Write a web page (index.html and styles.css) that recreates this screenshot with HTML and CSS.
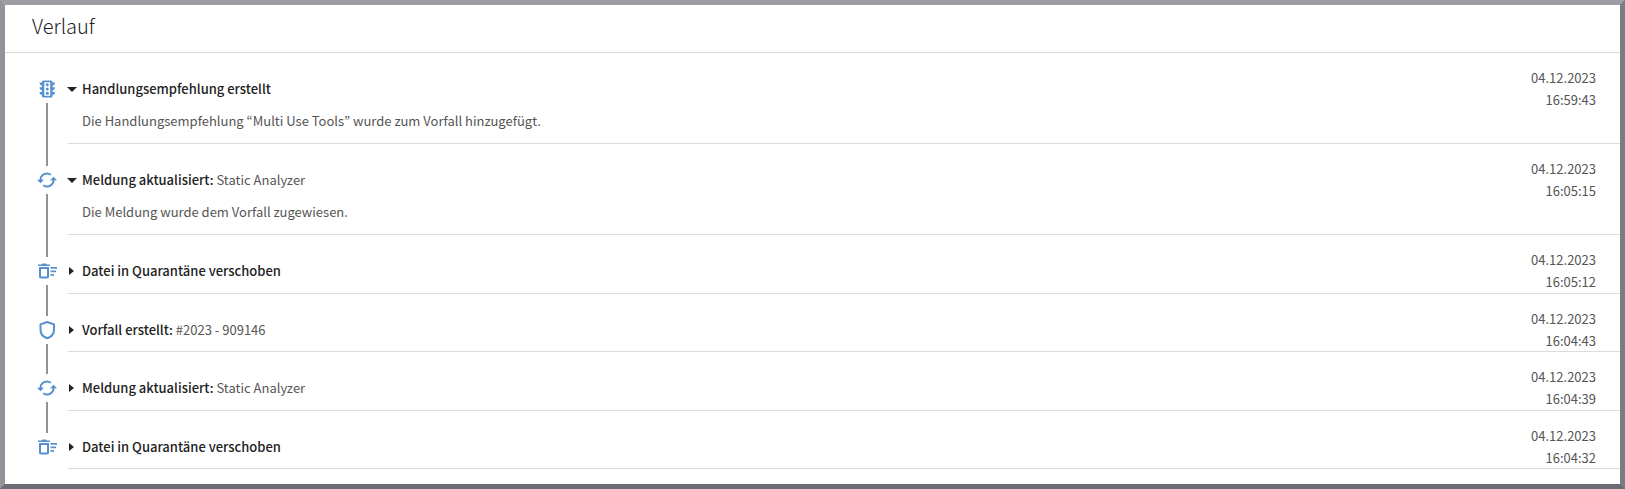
FILE: index.html
```html
<!DOCTYPE html>
<html lang="de">
<head>
<meta charset="utf-8">
<title>Verlauf</title>
<link rel="stylesheet" href="styles.css">
</head>
<body>
<svg class="sprite" aria-hidden="true">
  <symbol id="traffic" viewBox="0 0 20 20">
    <path fill-rule="evenodd" d="M6.500 1.500h7.500a1.500 1.500 0 0 1 1.500 1.500v.5H18c0 1.700-1 2.900-2.500 3.200v1.500H18c0 1.700-1 2.900-2.500 3.200v1.500H18c0 1.700-1 2.900-2.500 3.200v.9a1.500 1.500 0 0 1-1.500 1.500H6.500A1.500 1.500 0 0 1 5 17v-.9c-1.500-.3-2.500-1.500-2.500-3.200H5v-1.500c-1.500-.3-2.500-1.500-2.500-3.200H5V6.700C3.500 6.400 2.500 5.200 2.500 3.500H5V3a1.500 1.500 0 0 1 1.500-1.500zM7.300 3.300v13.400h5.900V3.300z"/>
    <circle cx="10.250" cy="5.700" r="1.500"/>
    <circle cx="10.250" cy="10" r="1.500"/>
    <circle cx="10.250" cy="14.300" r="1.500"/>
  </symbol>
  <symbol id="sync" viewBox="0 0 20 20">
    <path fill="none" stroke="currentColor" stroke-width="2" d="M3.500 10A6.500 6.500 0 0 1 13.800 4.700M16.500 10A6.500 6.500 0 0 1 6.200 15.300"/>
    <path d="M0 9.800h7L3.500 13.300zM13 10.200h7L16.500 6.700z"/>
  </symbol>
  <symbol id="trash" viewBox="0 0 20 20">
    <path fill-rule="evenodd" d="M1 3.500h3.500l1-1h3.500l1 1H13v1.500H1zM2 6h10V15.700a1.800 1.800 0 0 1-1.800 1.800H3.800A1.800 1.800 0 0 1 2 15.700zM4 8v7.500h6V8zM13.500 6h6.500v1.800h-6.500zM13.500 9.500h5.500v1.800h-5.500zM13.500 13h3.500v1.800h-3.500z"/>
  </symbol>
  <symbol id="shield" viewBox="0 0 20 20">
    <path fill="none" stroke="currentColor" stroke-width="2" stroke-linejoin="round" d="M10.250 2 17 4.400V9.700C17 13.400 14.500 16.800 10.250 18.200 6 16.800 3.500 13.400 3.500 9.700V4.400z"/>
  </symbol>
</svg>

<main class="panel">
  <header class="panel-header"><h1 class="panel-title">Verlauf</h1></header>
  <ol class="timeline">
    <li class="event">
      <div class="marker"><svg class="icon"><use href="#traffic"/></svg></div>
      <div class="event-body">
        <div class="event-main">
          <button class="toggle" type="button" aria-expanded="true" aria-controls="detail-1"><span class="caret"></span><span><strong class="event-name">Handlungsempfehlung erstellt</strong></span></button>
          <p class="detail" id="detail-1">Die Handlungsempfehlung “Multi Use Tools” wurde zum Vorfall hinzugefügt.</p>
        </div>
        <time class="stamp" datetime="2023-12-04T16:59:43"><span>04.12.2023</span><span>16:59:43</span></time>
      </div>
    </li>
    <li class="event">
      <div class="marker"><svg class="icon"><use href="#sync"/></svg></div>
      <div class="event-body">
        <div class="event-main">
          <button class="toggle" type="button" aria-expanded="true" aria-controls="detail-2"><span class="caret"></span><span><strong class="event-name">Meldung aktualisiert:</strong> Static Analyzer</span></button>
          <p class="detail" id="detail-2">Die Meldung wurde dem Vorfall zugewiesen.</p>
        </div>
        <time class="stamp" datetime="2023-12-04T16:05:15"><span>04.12.2023</span><span>16:05:15</span></time>
      </div>
    </li>
    <li class="event">
      <div class="marker"><svg class="icon"><use href="#trash"/></svg></div>
      <div class="event-body">
        <div class="event-main">
          <button class="toggle" type="button" aria-expanded="false"><span class="caret"></span><span><strong class="event-name">Datei in Quarantäne verschoben</strong></span></button>
        </div>
        <time class="stamp" datetime="2023-12-04T16:05:12"><span>04.12.2023</span><span>16:05:12</span></time>
      </div>
    </li>
    <li class="event">
      <div class="marker"><svg class="icon"><use href="#shield"/></svg></div>
      <div class="event-body">
        <div class="event-main">
          <button class="toggle" type="button" aria-expanded="false"><span class="caret"></span><span><strong class="event-name">Vorfall erstellt:</strong> #2023 - 909146</span></button>
        </div>
        <time class="stamp" datetime="2023-12-04T16:04:43"><span>04.12.2023</span><span>16:04:43</span></time>
      </div>
    </li>
    <li class="event">
      <div class="marker"><svg class="icon"><use href="#sync"/></svg></div>
      <div class="event-body">
        <div class="event-main">
          <button class="toggle" type="button" aria-expanded="false"><span class="caret"></span><span><strong class="event-name">Meldung aktualisiert:</strong> Static Analyzer</span></button>
        </div>
        <time class="stamp" datetime="2023-12-04T16:04:39"><span>04.12.2023</span><span>16:04:39</span></time>
      </div>
    </li>
    <li class="event">
      <div class="marker"><svg class="icon"><use href="#trash"/></svg></div>
      <div class="event-body">
        <div class="event-main">
          <button class="toggle" type="button" aria-expanded="false"><span class="caret"></span><span><strong class="event-name">Datei in Quarantäne verschoben</strong></span></button>
        </div>
        <time class="stamp" datetime="2023-12-04T16:04:32"><span>04.12.2023</span><span>16:04:32</span></time>
      </div>
    </li>
  </ol>
</main>
</body>
</html>
```

FILE: styles.css
```css
* {
  box-sizing: border-box;
}

body {
  margin: 0;
  background: #fff;
  color: #555;
  font: 400 13px/22px "Noto Sans CJK KR", "Noto Sans", sans-serif;
}

.sprite {
  display: none;
}

.panel {
  min-height: 100vh;
  border: 5px solid;
  border-color: #9c9ea4 #7a7d83 #6b6b73 #939499;
}

.panel-header {
  padding: 7px 27px 12px;
  border-bottom: 1px solid #dcdcdc;
}

.panel-title {
  margin: 0;
  color: #222;
  font-size: 20px;
  font-weight: 300;
  line-height: 28px;
}

.timeline {
  margin: 0;
  padding: 0 0 0 32px;
  list-style: none;
}

.event {
  display: flex;
  gap: 11px;
}

.marker {
  display: flex;
  flex-direction: column;
  align-items: center;
  width: 20px;
}

.marker::before,
.marker::after {
  content: "";
  width: 2px;
  background: #929296;
}

.marker::before {
  height: 22px;
}

.marker::after {
  flex: 1;
}

.event:first-child .marker::before,
.event:last-child .marker::after {
  background: none;
}

.icon {
  width: 20px;
  height: 20px;
  margin: 4px 0;
  fill: currentColor;
  color: #5590cf;
}

.event-body {
  display: flex;
  flex: 1;
  justify-content: space-between;
  gap: 24px;
  min-height: 58px;
  padding: 14px 24px 0 0;
  border-bottom: 1px solid #dcdcdc;
}

.event:nth-child(odd) .event-body {
  min-height: 59px;
}

.event-main {
  padding-top: 11px;
}

.toggle {
  display: flex;
  align-items: center;
  padding: 0;
  border: 0;
  background: none;
  color: inherit;
  font: inherit;
  text-align: left;
  cursor: pointer;
}

.event-name {
  color: #222;
  font-weight: 500;
}

.caret {
  width: 14px;
}

.caret::before {
  content: "";
  display: block;
  width: 0;
  margin-left: -1px;
  border: 5px solid transparent;
  border-top: 5px solid #222;
  border-bottom: 0;
}

.toggle[aria-expanded="false"] .caret::before {
  margin-left: 1px;
  border: 4px solid transparent;
  border-left: 5px solid #222;
  border-right: 0;
}

.detail {
  margin: 10px 0 11px;
  padding: 0 0 0 14px;
}

.stamp {
  display: flex;
  flex-direction: column;
  align-items: flex-end;
  margin-bottom: -1px;
}
```
